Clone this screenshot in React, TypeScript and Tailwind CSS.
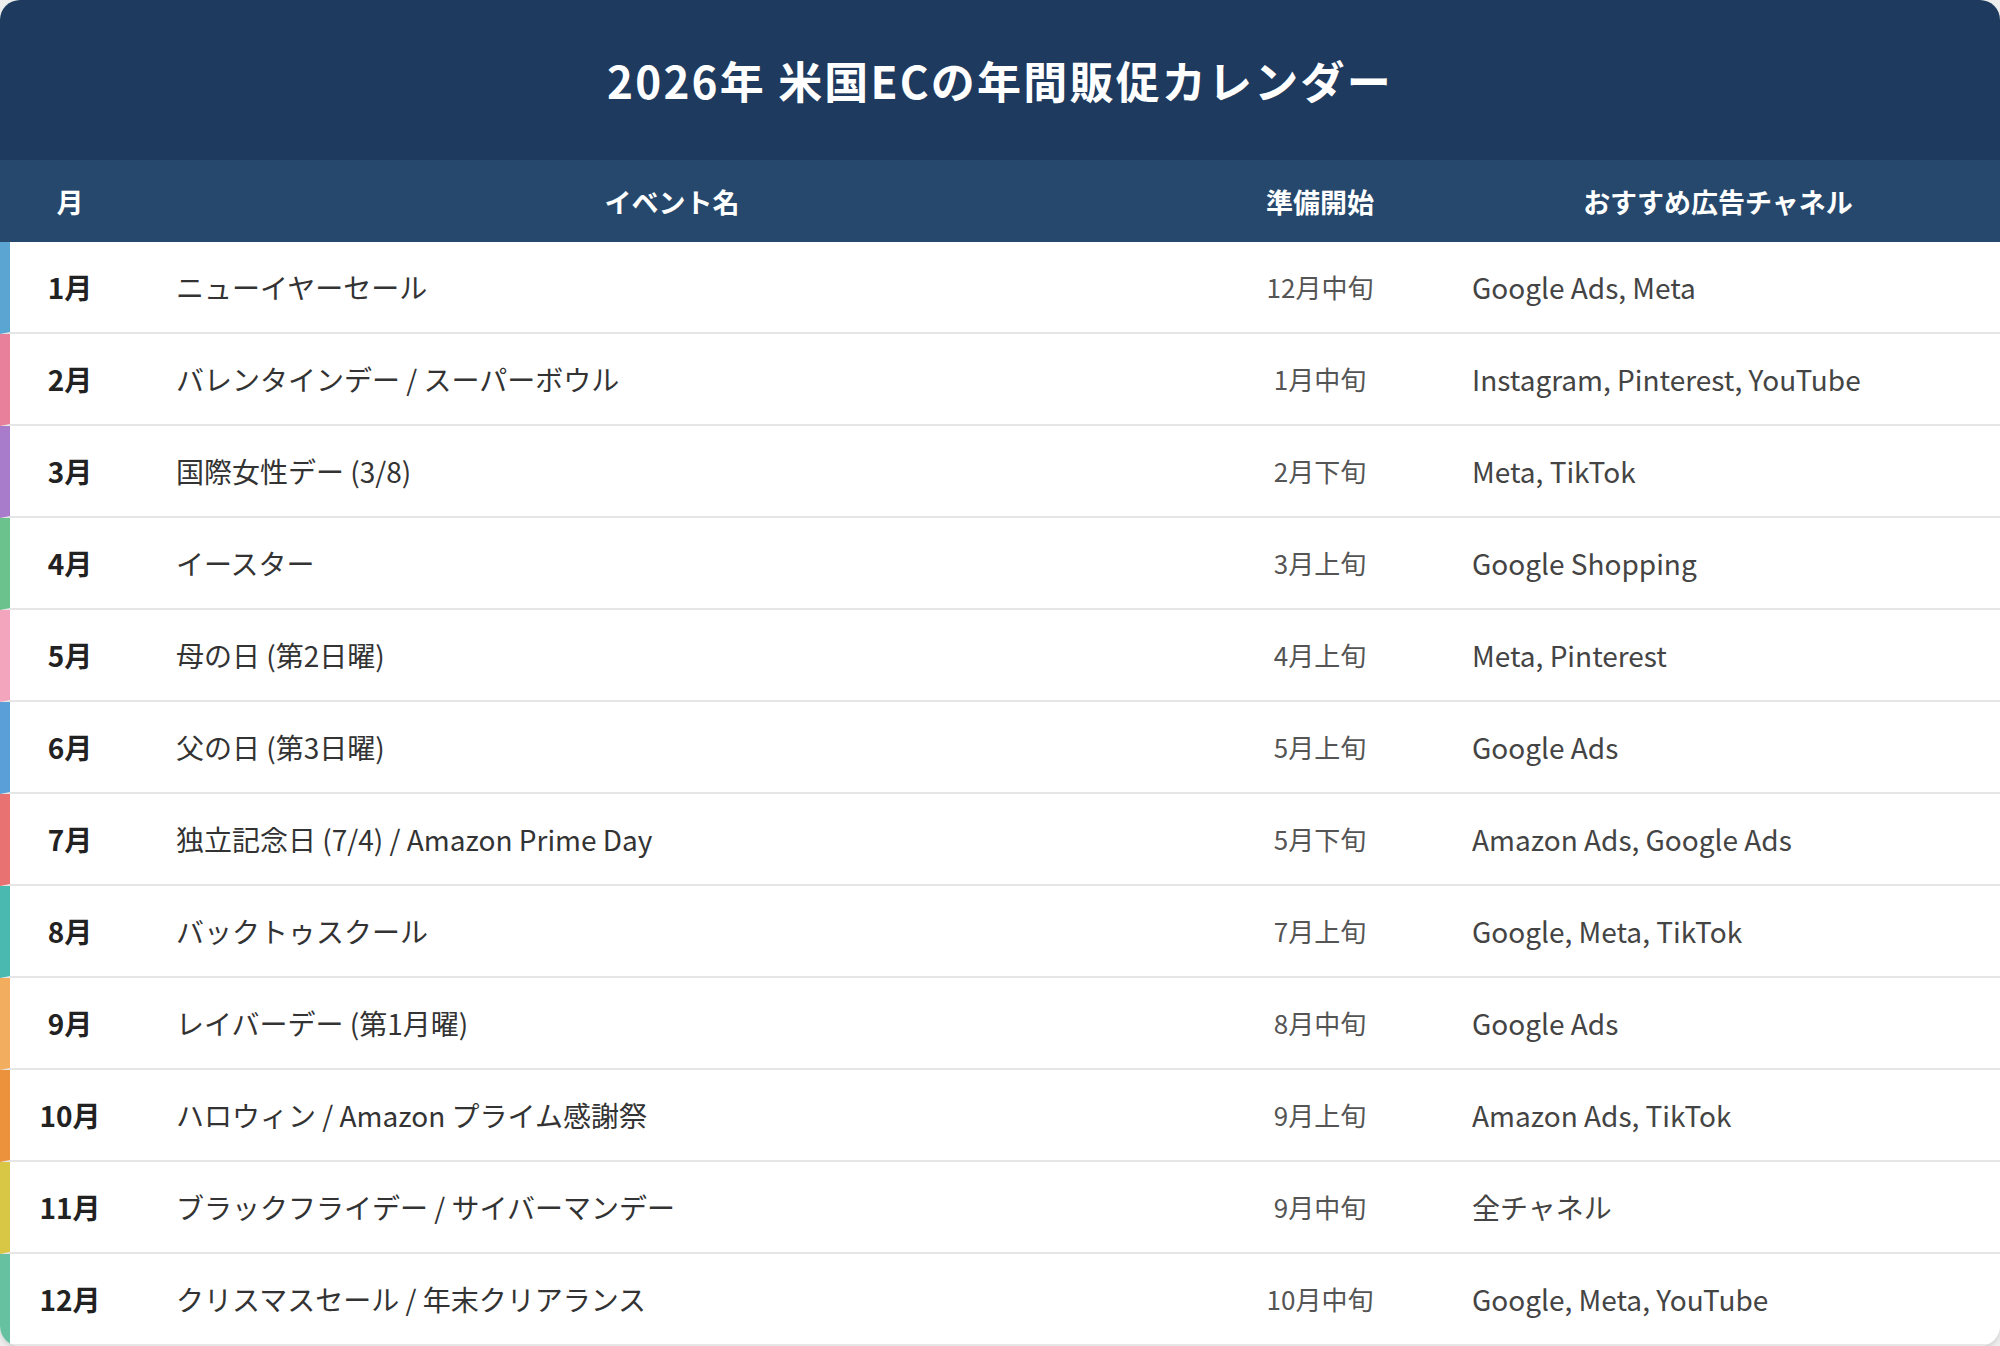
import React from "react";

type Row = {
  month: string;
  event: string;
  prep: string;
  channel: string;
  bar: string;
};

const rows: Row[] = [
  { month: "1月", event: "ニューイヤーセール", prep: "12月中旬", channel: "Google Ads, Meta", bar: "border-l-[#5ba5d3]" },
  { month: "2月", event: "バレンタインデー / スーパーボウル", prep: "1月中旬", channel: "Instagram, Pinterest, YouTube", bar: "border-l-[#e8809b]" },
  { month: "3月", event: "国際女性デー (3/8)", prep: "2月下旬", channel: "Meta, TikTok", bar: "border-l-[#a97bcb]" },
  { month: "4月", event: "イースター", prep: "3月上旬", channel: "Google Shopping", bar: "border-l-[#6cc28c]" },
  { month: "5月", event: "母の日 (第2日曜)", prep: "4月上旬", channel: "Meta, Pinterest", bar: "border-l-[#f2a5bd]" },
  { month: "6月", event: "父の日 (第3日曜)", prep: "5月上旬", channel: "Google Ads", bar: "border-l-[#5b9fd9]" },
  { month: "7月", event: "独立記念日 (7/4) / Amazon Prime Day", prep: "5月下旬", channel: "Amazon Ads, Google Ads", bar: "border-l-[#e87171]" },
  { month: "8月", event: "バックトゥスクール", prep: "7月上旬", channel: "Google, Meta, TikTok", bar: "border-l-[#4ab9b0]" },
  { month: "9月", event: "レイバーデー (第1月曜)", prep: "8月中旬", channel: "Google Ads", bar: "border-l-[#f3ad5f]" },
  { month: "10月", event: "ハロウィン / Amazon プライム感謝祭", prep: "9月上旬", channel: "Amazon Ads, TikTok", bar: "border-l-[#ec923d]" },
  { month: "11月", event: "ブラックフライデー / サイバーマンデー", prep: "9月中旬", channel: "全チャネル", bar: "border-l-[#d7c744]" },
  { month: "12月", event: "クリスマスセール / 年末クリアランス", prep: "10月中旬", channel: "Google, Meta, YouTube", bar: "border-l-[#66c1a0]" },
];

export default function App() {
  return (
    <div
      className="w-[2000px] h-[1346px] bg-[#eeeeee] overflow-hidden"
      style={{ fontFamily: '"Noto Sans CJK JP", "Noto Sans", sans-serif' }}
    >
      <div className="w-full h-full bg-white rounded-[20px] overflow-hidden shadow-md flex flex-col">
        <div className="h-[160px] shrink-0 bg-[#1e3a5e] flex items-center justify-center">
          <h1 className="text-white font-bold text-[44px] tracking-[0.05em] leading-none">
            2026年 米国ECの年間販促カレンダー
          </h1>
        </div>
        <div className="h-[82px] shrink-0 bg-[#26486c] grid grid-cols-[140px_1064px_232px_1fr] items-center text-white font-bold text-[27px] leading-none">
          <div className="text-center">月</div>
          <div className="text-center">イベント名</div>
          <div className="text-center">準備開始</div>
          <div className="text-center">おすすめ広告チャネル</div>
        </div>
        {rows.map((r) => (
          <div
            key={r.month}
            className={`h-[92px] shrink-0 grid grid-cols-[130px_1064px_232px_1fr] items-center border-l-[10px] border-b-2 border-b-[#e6e6e6] ${r.bar}`}
          >
            <div className="text-center pr-[10px] font-bold text-[28px] text-[#222222] leading-none">
              {r.month}
            </div>
            <div className="pl-[36px] text-[28px] text-[#333333] leading-none whitespace-nowrap">
              {r.event}
            </div>
            <div className="text-center text-[26px] text-[#555555] leading-none">{r.prep}</div>
            <div className="pl-[36px] text-[28px] text-[#444444] leading-none whitespace-nowrap">
              {r.channel}
            </div>
          </div>
        ))}
      </div>
    </div>
  );
}
